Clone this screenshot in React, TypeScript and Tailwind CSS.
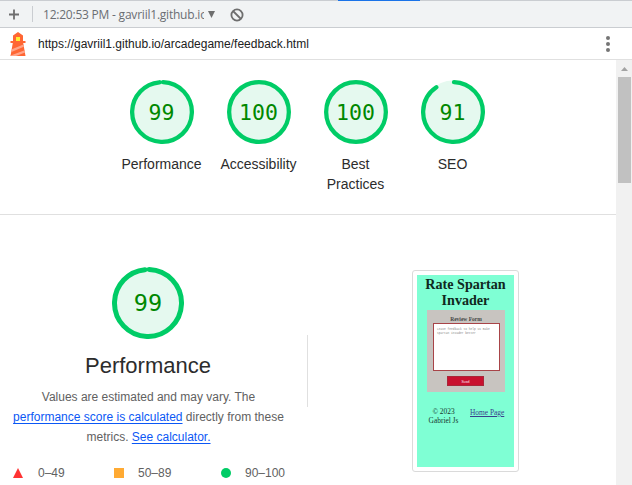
type GaugeProps = { score: number; size: number; stroke: number; fontClass: string };

function Gauge({ score, size, stroke, fontClass }: GaugeProps) {
  const r = size / 2 - stroke / 2;
  const c = 2 * Math.PI * r;
  const arc = score === 100 ? c : (score / 100) * c - stroke / 2;
  return (
    <div className="relative" style={{ width: size, height: size }}>
      <svg width={size} height={size} viewBox={`0 0 ${size} ${size}`} className="block">
        <circle cx={size / 2} cy={size / 2} r={size / 2 - 0.5} fill="#e5f9ef" />
        <circle
          cx={size / 2}
          cy={size / 2}
          r={r}
          fill="none"
          stroke="#00cc66"
          strokeWidth={stroke}
          strokeLinecap="round"
          strokeDasharray={`${arc} ${c}`}
          transform={`rotate(${score === 100 ? -90 : -88} ${size / 2} ${size / 2})`}
        />
      </svg>
      <div
        className={`absolute inset-0 flex items-center justify-center font-['DejaVu_Sans_Mono',monospace] text-[#008800] ${fontClass}`}
      >
        {score}
      </div>
    </div>
  );
}

const categories = [
  { label: 'Performance', score: 99 },
  { label: 'Accessibility', score: 100 },
  { label: 'Best Practices', score: 100 },
  { label: 'SEO', score: 91 },
];

function Toolbar() {
  return (
    <div className="flex h-7 items-center border-y border-[#cacdd1] bg-[#f1f3f4] text-[#6a6e73]">
      <svg width="11" height="11" viewBox="0 0 11 11" className="ml-[9px] block">
        <path d="M5 0.5v10M0 5.5h10" stroke="#6e6e6e" strokeWidth="1.8" />
      </svg>
      <div className="ml-3 h-4 w-px bg-[#cacdd1]" />
      <div className="ml-[10px] w-[161px] overflow-hidden pt-0.5 font-['Open_Sans',sans-serif] text-xs leading-4 tracking-[-0.22px] whitespace-nowrap">
        12:20:53 PM - gavriil1.github.io
      </div>
      <svg width="7" height="7" viewBox="0 0 7 7" className="ml-1 block">
        <path d="M0 0h7L3.5 7z" fill="#6e6e6e" />
      </svg>
      <svg width="14" height="14" viewBox="0 0 14 14" className="mt-px ml-[15px] block">
        <circle cx="7" cy="7" r="5.6" fill="none" stroke="#6e6e6e" strokeWidth="1.8" />
        <path d="M3 3l8 8" stroke="#6e6e6e" strokeWidth="1.8" />
      </svg>
    </div>
  );
}

function Lighthouse() {
  return (
    <svg width="16" height="24" viewBox="0 0 16 24" className="ml-[10px] block">
      <path d="M8 0L13 3.5V9H15.5V11H13.2L15.5 24H.5L2.8 11H.5V9H3V3.5z" fill="#ff6633" />
      <path d="M6 5h4v4H6z" fill="#ffee33" />
      <path d="M1.9 17.2L13.4 12.6l.4 2.2L1.5 20zM.7 23.5l14-5.2.4 2.2L6 24H.6z" fill="#ffa58a" />
    </svg>
  );
}

function PageThumbnail() {
  return (
    <div className="mt-[55px] ml-[104px] h-[202px] w-[107px] rounded-[3px] border border-[#dadada] bg-white p-1">
      <div className="h-48 w-[97px] bg-[#7fffd4] pt-px font-['Liberation_Serif',serif] text-black">
        <div className="text-center text-[14.1px] leading-4 font-bold text-[#102820]">
          Rate Spartan
          <br />
          Invader
        </div>
        <div className="mt-0.5 ml-[10px] flex h-[82px] w-[78px] flex-col items-center bg-[#c8c4c0]">
          <div className="mt-[6px] text-[5.5px] leading-[7px] font-bold text-[#444]">Review Form</div>
          <div className="ml-px h-12 w-[67px] border border-[#a84448] bg-white px-[3px] pt-1 font-['Liberation_Mono',monospace] text-[2.95px] leading-[3.5px] whitespace-nowrap text-[#888]">
            Leave feedback to help us make
            <br />
            spartan invader better
          </div>
          <div className="mt-[5px] mr-px flex h-[10px] w-[37px] items-center justify-center border border-[#a82638] bg-[#c8102e] text-[4px] leading-[5px] text-white">
            Send
          </div>
        </div>
        <div className="mt-[15px] flex text-[7.4px] leading-[9px] text-[#17372d]">
          <div className="ml-[10px] w-[33px] text-center whitespace-nowrap">
            © 2023
            <br />
            Gabriel Js
          </div>
          <div className="ml-[10px] pt-px whitespace-nowrap text-[#3a3f8c] underline">Home Page</div>
        </div>
      </div>
    </div>
  );
}

export default function App() {
  return (
    <div className="flex h-[485px] w-[632px] flex-col overflow-hidden bg-white font-['Liberation_Sans',Arial,sans-serif]">
      <div className="absolute top-0 left-[338px] h-px w-[82px] bg-[#1a73e8]" />
      <Toolbar />
      <div className="flex h-8 shrink-0 items-center border-b border-[#e0e0e0]">
        <Lighthouse />
        <div className="ml-3 text-xs text-[#212121]">https://gavriil1.github.io/arcadegame/feedback.html</div>
        <svg width="4" height="16" viewBox="0 0 4 16" className="mr-[22px] ml-auto block">
          <circle cx="2" cy="2" r="2" fill="#757575" />
          <circle cx="2" cy="8" r="2" fill="#757575" />
          <circle cx="2" cy="14" r="2" fill="#757575" />
        </svg>
      </div>
      <div className="flex min-h-0 flex-1">
        <div className="flex w-[616px] flex-col">
          <div className="flex h-[155px] shrink-0 justify-center border-b border-[#e0e0e0] pt-5 pr-px">
            {categories.map((item) => (
              <div key={item.label} className="flex w-[97px] flex-col items-center">
                <Gauge score={item.score} size={64} stroke={4.3} fontClass="text-[21.5px] pt-0.5 pr-px" />
                <div className="mt-[10px] pr-[9px] pl-2 text-center text-sm leading-5 text-[#2c2c2c]">{item.label}</div>
              </div>
            ))}
          </div>
          <div className="flex">
            <div className="flex w-[307px] flex-col pt-[52px]">
              <div className="flex w-[296px] flex-col items-center">
                <Gauge score={99} size={72} stroke={5} fontClass="text-[23.5px] pt-0.5" />
                <div className="mt-[11px] text-[22px] leading-8 text-[#2c2c2c]">Performance</div>
                <div className="mt-[5px] w-[280px] pl-px text-center text-xs leading-5 text-[#616161]">
                  Values are estimated and may vary. The
                  <br />
                  <span className="text-[#0b57f5] underline underline-offset-2">performance score is calculated</span> directly from these
                  <br />
                  metrics. <span className="text-[#0b57f5] underline underline-offset-2">See calculator.</span>
                </div>
              </div>
              <div className="mt-4 ml-[13px] flex h-5 items-center text-xs text-[#616161]">
                <svg width="10" height="10" viewBox="0 0 10 10">
                  <path d="M5 0l5 10H0z" fill="#ff3333" />
                </svg>
                <span className="ml-[15px] w-[76px]">0–49</span>
                <div className="h-[10px] w-[10px] bg-[#ffaa33]" />
                <span className="ml-[14px] w-[83px]">50–89</span>
                <div className="h-[10px] w-[10px] rounded-full bg-[#00cc66]" />
                <span className="ml-[14px]">90–100</span>
              </div>
            </div>
            <div className="mt-[120px] h-[72px] w-px bg-[#e0e0e0]" />
            <PageThumbnail />
          </div>
        </div>
        <div className="flex w-4 flex-col items-center bg-[#f1f1f1]">
          <svg width="7" height="4" viewBox="0 0 7 4" className="mt-[7px] block">
            <path d="M3.5 0L7 4H0z" fill="#a3a3a3" />
          </svg>
          <div className="mt-[6px] ml-px h-[106px] w-[13px] bg-[#c1c1c1]" />
        </div>
      </div>
    </div>
  );
}
